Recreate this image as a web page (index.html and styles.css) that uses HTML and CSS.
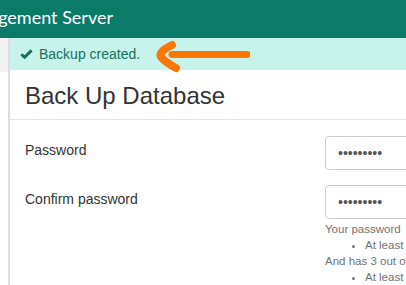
FILE: index.html
```html
<!DOCTYPE html>
<html lang="en">
<head>
<meta charset="UTF-8">
<meta name="viewport" content="width=device-width, initial-scale=1.0">
<title>Back Up Database</title>
    <link rel="stylesheet" href="styles.css">
</head>
<body>
    <!-- top bar -->
    <header class="topbar">
        <div class="brand"><span>Management Server</span></div>
    </header>

    <div class="layout">
        <div class="sidebar">
            <div class="sidebar-top"></div>
        </div>

        <main class="main">
            <!-- success message -->
            <div class="alert">
                <svg class="check-icon" width="13" height="10" viewBox="0 0 13 10">
                    <path d="M1.3 5.2 L4.6 8.4 L11.6 1.4" fill="none" stroke="#1b7060" stroke-width="2.9"/>
                </svg>
                <span>Backup created.</span>
            </div>

            <div class="panel-header">
                <h1 class="title">Back Up Database</h1>
            </div>

            <form class="form">
                <label class="form-label" for="password">Password</label>
                <div class="form-field">
                    <input id="password" class="form-input" type="password" value="123456789">
                </div>

                <label class="form-label" for="confirm">Confirm password</label>
                <div class="form-field">
                    <input id="confirm" class="form-input" type="password" value="123456789">
                    <div class="help">
                        <div>Your password</div>
                        <ul class="help-list">
                            <li>At least</li>
                        </ul>
                        <div>And has 3 out of</div>
                        <ul class="help-list">
                            <li>At least</li>
                        </ul>
                    </div>
                </div>
            </form>
        </main>
    </div>

    <!-- annotation arrow -->
    <svg class="arrow" width="100" height="36" viewBox="0 0 100 36">
        <path d="M97 16.5 L22 16.5" fill="none" stroke="#ff7700" stroke-width="7" stroke-linecap="round"/>
        <path d="M22 7 Q8 14 11 19 Q15 24 26 30" fill="none" stroke="#ff7700" stroke-width="8" stroke-linecap="round" stroke-linejoin="round"/>
    </svg>
</body>
</html>
```

FILE: styles.css
```css
body {
    margin: 0;
    overflow: hidden;
    font-family: "Liberation Sans", Arial, sans-serif;
    font-size: 14px;
    color: #333;
    background: #fff;
}

/* top bar */
.topbar {
    height: 38px;
    background: #0b7b69;
}
.brand {
    display: flex;
    justify-content: flex-end; /* overflow goes off to the left */
    width: 113px;
    white-space: nowrap;
    font-family: Lato, "Open Sans", sans-serif;
    font-size: 18px;
    line-height: 34px;
    color: #fff;
}

.layout {
    display: flex;
    min-height: 247px;
}
.sidebar {
    flex-shrink: 0;
    width: 8px;
}
.sidebar-top {
    height: 34px;
    background: #f2f2f2;
}
.main {
    flex: 1;
    min-width: 0;
    overflow: hidden;
    border-left: 2px solid #dddddd;
}

/* success message */
.alert {
    display: flex;
    align-items: flex-start;
    gap: 6px;
    height: 32px;
    box-sizing: border-box;
    padding: 6px 10px 0;
    line-height: 20px;
    background: #c6f3ea;
    color: #1b7060;
}
.check-icon {
    margin-top: 5px;
}

.panel-header {
    padding: 13px 15px 10px;
    border-bottom: 1px solid #e5e5e5;
}
.title {
    margin: 0;
    font-size: 24px;
    font-weight: normal;
    line-height: 26px;
    color: #333;
}

/* form */
.form {
    display: grid;
    grid-template-columns: 300px 240px;
    row-gap: 15px;
    padding: 16px 15px 0;
}
.form-label {
    padding-top: 4px;
    line-height: 20px;
}
.form-input {
    display: block;
    width: 100%;
    height: 34px;
    box-sizing: border-box;
    padding: 6px 12px;
    border: 1px solid #ccc;
    border-radius: 4px;
    font-family: "Liberation Sans", Arial, sans-serif;
    font-size: 14px;
    color: #555;
    outline: none;
}
.help {
    margin-top: 2px;
    font-size: 11.5px;
    line-height: 16px;
    color: #737373;
    white-space: nowrap;
}
.help-list {
    margin: 0;
    padding-left: 40px;
}

.arrow {
    position: absolute;
    left: 150px;
    top: 38px;
}
```
